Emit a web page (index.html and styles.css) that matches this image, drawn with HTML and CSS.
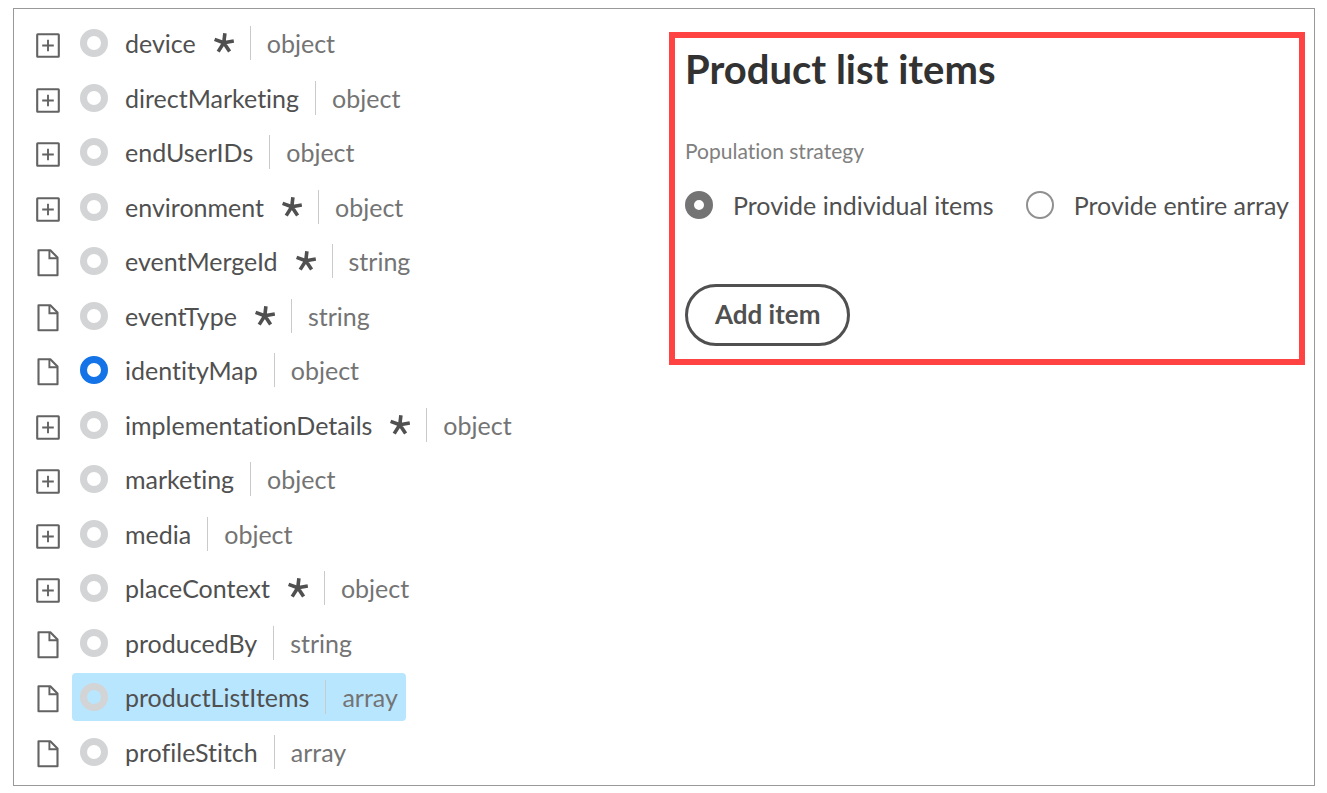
FILE: index.html
```html
<!DOCTYPE html>
<html lang="en">
<head>
<meta charset="utf-8">
<title>Product list items</title>
<link rel="stylesheet" href="styles.css">
</head>
<body>
<svg class="sprite" aria-hidden="true">
  <symbol id="plus" viewBox="0 0 24 28">
    <rect x="1.2" y="3.2" width="21.6" height="22.6" rx="0.5" fill="none" stroke="currentColor" stroke-width="2.1"/>
    <path d="M12 8.7v11.6M6.2 14.5h11.6" fill="none" stroke="currentColor" stroke-width="1.9"/>
  </symbol>
  <symbol id="file" viewBox="0 0 24 28">
    <path d="M2.5 1.2h11.8l7.2 7.3v17.8h-19z" fill="none" stroke="currentColor" stroke-width="2.1" stroke-linejoin="round"/>
    <path d="M13.4 1.5v7.7h7.8" fill="none" stroke="currentColor" stroke-width="1.9"/>
  </symbol>
  <symbol id="star" viewBox="0 0 20 20">
    <path d="M9.8 9.8L10.9 0.2M9.8 9.8L19.8 8M9.8 9.8L15.6 18.6M9.8 9.8L4.2 18.6M9.8 9.8L0.6 6.4" fill="none" stroke="currentColor" stroke-width="3.6"/>
  </symbol>
</svg>
<main class="frame">
  <ul class="tree">
    <li class="row"><button class="toggle" aria-label="Expand device"><svg class="icon"><use href="#plus"/></svg></button><div class="node"><span class="ring"></span><span class="name">device</span><svg class="star"><use href="#star"/></svg><span class="type">object</span></div></li>
    <li class="row"><button class="toggle" aria-label="Expand directMarketing"><svg class="icon"><use href="#plus"/></svg></button><div class="node"><span class="ring"></span><span class="name">directMarketing</span><span class="type">object</span></div></li>
    <li class="row"><button class="toggle" aria-label="Expand endUserIDs"><svg class="icon"><use href="#plus"/></svg></button><div class="node"><span class="ring"></span><span class="name">endUserIDs</span><span class="type">object</span></div></li>
    <li class="row"><button class="toggle" aria-label="Expand environment"><svg class="icon"><use href="#plus"/></svg></button><div class="node"><span class="ring"></span><span class="name">environment</span><svg class="star"><use href="#star"/></svg><span class="type">object</span></div></li>
    <li class="row"><svg class="icon"><use href="#file"/></svg><div class="node"><span class="ring"></span><span class="name">eventMergeId</span><svg class="star"><use href="#star"/></svg><span class="type">string</span></div></li>
    <li class="row"><svg class="icon"><use href="#file"/></svg><div class="node"><span class="ring"></span><span class="name">eventType</span><svg class="star"><use href="#star"/></svg><span class="type">string</span></div></li>
    <li class="row"><svg class="icon"><use href="#file"/></svg><div class="node"><span class="ring ring-filled"></span><span class="name">identityMap</span><span class="type">object</span></div></li>
    <li class="row"><button class="toggle" aria-label="Expand implementationDetails"><svg class="icon"><use href="#plus"/></svg></button><div class="node"><span class="ring"></span><span class="name">implementationDetails</span><svg class="star"><use href="#star"/></svg><span class="type">object</span></div></li>
    <li class="row"><button class="toggle" aria-label="Expand marketing"><svg class="icon"><use href="#plus"/></svg></button><div class="node"><span class="ring"></span><span class="name">marketing</span><span class="type">object</span></div></li>
    <li class="row"><button class="toggle" aria-label="Expand media"><svg class="icon"><use href="#plus"/></svg></button><div class="node"><span class="ring"></span><span class="name">media</span><span class="type">object</span></div></li>
    <li class="row"><button class="toggle" aria-label="Expand placeContext"><svg class="icon"><use href="#plus"/></svg></button><div class="node"><span class="ring"></span><span class="name">placeContext</span><svg class="star"><use href="#star"/></svg><span class="type">object</span></div></li>
    <li class="row"><svg class="icon"><use href="#file"/></svg><div class="node"><span class="ring"></span><span class="name">producedBy</span><span class="type">string</span></div></li>
    <li class="row"><svg class="icon"><use href="#file"/></svg><div class="node node-selected"><span class="ring"></span><span class="name">productListItems</span><span class="type">array</span></div></li>
    <li class="row"><svg class="icon"><use href="#file"/></svg><div class="node"><span class="ring"></span><span class="name">profileStitch</span><span class="type">array</span></div></li>
  </ul>
  <section class="panel">
    <h1 class="title">Product list items</h1>
    <fieldset class="strategy">
      <legend class="legend">Population strategy</legend>
      <div class="options">
        <label class="option"><input class="radio" type="radio" name="strategy" checked>Provide individual items</label>
        <label class="option"><input class="radio" type="radio" name="strategy">Provide entire array</label>
      </div>
    </fieldset>
    <button class="add" type="button">Add item</button>
  </section>
</main>
</body>
</html>
```
FILE: styles.css
```css
* {
  box-sizing: border-box;
}

body {
  margin: 0;
  padding: 8px 12px 7px 13px;
  background: #fff;
  color: #505050;
  font: 25px/34px Lato, "Noto Sans", sans-serif;
  font-variant-ligatures: none;
}

.sprite {
  display: none;
}

.frame {
  display: grid;
  grid-template-columns: minmax(0, 655fr) minmax(0, 636fr);
  min-height: calc(100vh - 15px);
  padding: 7px 9px 6px 0;
  border: 1px solid #999;
}

.tree {
  display: grid;
  grid-auto-rows: 1fr;
  margin: 0;
  padding: 0 0 0 22px;
  list-style: none;
}

.row {
  display: flex;
  align-items: center;
  gap: 12px;
}

.toggle {
  display: block;
  padding: 0;
  border: 0;
  background: none;
  color: inherit;
  cursor: pointer;
}

.icon {
  display: block;
  flex: none;
  width: 24px;
  height: 28px;
  margin-top: 4px;
  color: #636363;
}

.node {
  display: flex;
  align-items: center;
  height: 48px;
  padding: 0 8px;
  border-radius: 4px;
}

.node-selected {
  background: #b9e6ff;
}

.ring {
  width: 28px;
  height: 28px;
  margin-right: 17px;
  border: 7px solid #d3d4d5;
  border-radius: 50%;
}

.ring-filled {
  border-color: #1473e6;
}

.star {
  width: 20px;
  height: 20px;
  margin-left: 18px;
}

.type {
  margin-left: 16px;
  padding-left: 16px;
  border-left: 1px solid #cacaca;
  color: #747474;
}

.panel {
  align-self: start;
  margin-top: 16px;
  padding: 7px 0 13px 10px;
  border: 6px solid #ff4343;
}

.title {
  margin: 0;
  color: #323232;
  font-size: 40px;
  font-weight: 700;
  line-height: 48px;
}

.strategy {
  min-width: 0;
  margin: 44px 0 0;
  padding: 0;
  border: 0;
}

.legend {
  padding: 0;
  color: #808080;
  font-size: 21px;
  line-height: 28px;
}

.options {
  display: flex;
  flex-wrap: wrap;
  gap: 12px 32px;
  margin-top: 23px;
}

.option {
  display: flex;
  align-items: center;
}

.radio {
  appearance: none;
  width: 28px;
  height: 28px;
  margin: 0 20px 0 0;
  border: 2px solid #909090;
  border-radius: 50%;
  background: #fff;
}

.radio:checked {
  border: 9px solid #747474;
}

.add {
  margin-top: 62px;
  padding: 10px 27px 12px;
  border: 3px solid #505050;
  border-radius: 32px;
  background: #fff;
  color: #505050;
  font: inherit;
  font-size: 26px;
  font-weight: 700;
}
```
